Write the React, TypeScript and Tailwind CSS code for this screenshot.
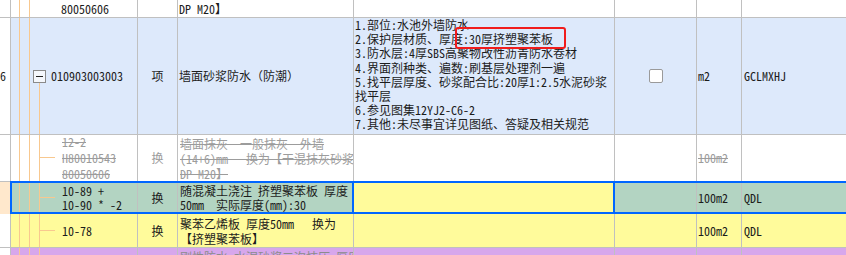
import React from 'react';

const font = "font-['Noto_Sans_Mono_CJK_SC','Noto_Sans_CJK_SC',monospace]";

const Line = ({ className }: { className: string }) => (
  <span className={`absolute w-px bg-[#f8c88f] ${className}`} />
);

const Branch = ({ className }: { className: string }) => (
  <span className={`absolute h-px w-[15px] bg-[#f8c88f] ${className}`} />
);

const desc = [
  '1.部位:水池外墙防水',
  '2.保护层材质、厚度:30厚挤塑聚苯板',
  '3.防水层:4厚SBS高聚物改性沥青防水卷材',
  '4.界面剂种类、遍数:刷基层处理剂一遍',
  '5.找平层厚度、砂浆配合比:20厚1:2.5水泥砂浆',
  '找平层',
  '6.参见图集12YJ2-C6-2',
  '7.其他:未尽事宜详见图纸、答疑及相关规范',
];

export default function App() {
  return (
    <div className={`relative w-[846px] h-[255px] overflow-hidden bg-white text-[12px] text-[#1c1c1c] ${font}`}>
      {/* row: tail of previous item */}
      <div className="flex h-[18px] border-b border-[#c0c0c0] leading-[14px]">
        <div className="w-[11px] border-r border-[#c0c0c0]" />
        <div className="relative flex w-[127px] items-center border-r border-[#c0c0c0] pl-[50px]">
          <Line className="left-[8px] top-0 bottom-0" />
          <Line className="left-[18px] top-0 bottom-0" />
          80050606
        </div>
        <div className="w-[40px] border-r border-[#c0c0c0]" />
        <div className="flex w-[176px] items-center border-r border-[#c0c0c0] pl-[1px] whitespace-pre">DP M20】</div>
        <div className="w-[261px] border-r border-[#c0c0c0]" />
        <div className="w-[82px] border-r border-[#c0c0c0]" />
        <div className="w-[45px] border-r border-[#c0c0c0]" />
        <div className="flex-1" />
      </div>

      {/* row 6: bill item */}
      <div className="flex h-[117px] border-b border-[#c0c0c0]">
        <div className="flex w-[11px] items-center overflow-hidden border-r border-[#c0c0c0] bg-white">6</div>
        <div className="relative flex w-[127px] items-center border-r border-[#c0c0c0] bg-[#dde9fb] pl-[40px]">
          <Line className="left-[8px] top-0 bottom-0" />
          <Line className="left-[18px] top-0 bottom-0" />
          <Line className="left-[28px] top-[65px] bottom-0" />
          <span className="absolute left-[22px] top-[52px] flex h-[13px] w-[13px] items-center justify-center border border-[#8a8a8a] bg-[#f4f7fc]">
            <span className="h-px w-[7px] bg-[#222]" />
          </span>
          010903003003
        </div>
        <div className="flex w-[40px] items-center justify-center border-r border-[#c0c0c0] bg-[#dde9fb]">项</div>
        <div className="flex w-[176px] items-center border-r border-[#c0c0c0] bg-[#dde9fb] pl-[1px]">墙面砂浆防水（防潮）</div>
        <div className="w-[261px] overflow-hidden border-r border-[#c0c0c0] bg-[#dde9fb] pl-[1px] leading-[14.2px]">
          {desc.map((l) => (
            <div key={l} className="whitespace-nowrap">{l}</div>
          ))}
        </div>
        <div className="flex w-[82px] items-center justify-center border-r border-[#c0c0c0] bg-[#dde9fb]">
          <span className="h-[14px] w-[14px] rounded-[2px] border border-[#9a9a9a] bg-white" />
        </div>
        <div className="flex w-[45px] items-center border-r border-[#c0c0c0] bg-[#dde9fb] pl-[1px]">m2</div>
        <div className="flex flex-1 items-center bg-[#dde9fb] pl-[2px]">GCLMXHJ</div>
      </div>

      {/* replaced quota (struck out) */}
      <div className="flex h-[46px] leading-[16px] text-[#9c9c9c]">
        <div className="w-[11px] border-r border-[#c0c0c0]" />
        <div className="relative flex w-[127px] flex-col justify-center border-r border-[#c0c0c0] pl-[51px] line-through">
          <Line className="left-[8px] top-0 bottom-0" />
          <Line className="left-[18px] top-0 bottom-0" />
          <Line className="left-[28px] top-0 bottom-0" />
          <Branch className="left-[29px] top-[22px]" />
          <div>12-2</div>
          <div>H80010543</div>
          <div>80050606</div>
        </div>
        <div className="flex w-[40px] items-center justify-center border-r border-[#c0c0c0]">换</div>
        <div className="flex w-[176px] flex-col justify-center overflow-hidden border-r border-[#c0c0c0] pl-[2px] leading-[15px] whitespace-pre line-through">
          <div>墙面抹灰  一般抹灰  外墙</div>
          <div>(14+6)mm   换为【干混抹灰砂浆</div>
          <div>DP M20】</div>
        </div>
        <div className="w-[261px] border-r border-[#c0c0c0]" />
        <div className="w-[82px] border-r border-[#c0c0c0]" />
        <div className="flex w-[45px] items-center border-r border-[#c0c0c0] pl-[1px] line-through">100m2</div>
        <div className="flex-1" />
      </div>

      {/* selected row */}
      <div className="flex h-[33px] leading-[14px]">
        <div className="w-[10px] border-t border-[#c0c0c0] bg-[#ffe8cc]" />
        <div className="flex flex-1 border-y-2 border-l-2 border-[#0066ff] bg-[#b3d4c2]">
          <div className="relative flex w-[126px] flex-col justify-center border-r border-[#c0c0c0] pl-[50px] whitespace-pre">
            <Line className="left-[7px] top-0 bottom-0" />
            <Line className="left-[17px] top-0 bottom-0" />
            <Line className="left-[27px] top-0 bottom-0" />
            <Branch className="left-[28px] top-[14px]" />
            <div>10-89 +</div>
            <div>10-90 * -2</div>
          </div>
          <div className="flex w-[40px] items-center justify-center border-r border-[#c0c0c0]">换</div>
          <div className="flex w-[174px] flex-col justify-center overflow-hidden pl-[2px] whitespace-pre">
            <div>随混凝土浇注 挤塑聚苯板 厚度</div>
            <div>50mm  实际厚度(mm):30</div>
          </div>
          <div className="w-[263px] border-x-2 border-[#0066ff] bg-[#fffb9b]" />
          <div className="w-[82px] border-r border-[#c0c0c0]" />
          <div className="flex w-[45px] items-center border-r border-[#c0c0c0] pl-[1px]">100m2</div>
          <div className="flex flex-1 items-center pl-[2px]">QDL</div>
        </div>
      </div>

      {/* 10-78 */}
      <div className="flex h-[34px] border-b border-[#c0c0c0] leading-[15px]">
        <div className="w-[11px] border-r border-[#c0c0c0] bg-white" />
        <div className="relative flex w-[127px] items-center border-r border-[#c0c0c0] bg-[#fffb9b] pl-[51px]">
          <Line className="left-[8px] top-0 bottom-0" />
          <Line className="left-[18px] top-0 bottom-0" />
          <Line className="left-[28px] top-0 bottom-0" />
          <Branch className="left-[29px] top-[16px]" />
          10-78
        </div>
        <div className="flex w-[40px] items-center justify-center border-r border-[#c0c0c0] bg-[#fffb9b]">换</div>
        <div className="flex w-[176px] flex-col justify-center overflow-hidden border-r border-[#c0c0c0] bg-[#fffb9b] pl-[2px] whitespace-pre">
          <div>聚苯乙烯板 厚度50mm   换为</div>
          <div>【挤塑聚苯板】</div>
        </div>
        <div className="w-[261px] border-r border-[#c0c0c0] bg-[#fffb9b]" />
        <div className="w-[82px] border-r border-[#c0c0c0] bg-[#fffb9b]" />
        <div className="flex w-[45px] items-center border-r border-[#c0c0c0] bg-[#fffb9b] pl-[1px]">100m2</div>
        <div className="flex flex-1 items-center bg-[#fffb9b] pl-[2px]">QDL</div>
      </div>

      {/* next item, cut off */}
      <div className="flex h-[40px] leading-[15px] text-[#8c8c8c]">
        <div className="w-[11px] border-r border-[#c0c0c0] bg-white" />
        <div className="relative w-[127px] border-r border-[#c0c0c0] bg-[#d7a7ec]">
          <Line className="left-[8px] top-0 bottom-0" />
          <Line className="left-[18px] top-0 bottom-0" />
          <Line className="left-[28px] top-0 bottom-0" />
        </div>
        <div className="w-[40px] border-r border-[#c0c0c0] bg-[#d7a7ec]" />
        <div className="w-[176px] overflow-hidden border-r border-[#c0c0c0] bg-[#d7a7ec] pl-[2px] pt-[1px] whitespace-pre">刚性防水 水泥砂浆二次抹压 厚度</div>
        <div className="w-[261px] border-r border-[#c0c0c0] bg-[#d7a7ec]" />
        <div className="w-[82px] border-r border-[#c0c0c0] bg-[#d7a7ec]" />
        <div className="w-[45px] border-r border-[#c0c0c0] bg-[#d7a7ec]" />
        <div className="flex-1 bg-[#d7a7ec]" />
      </div>

      {/* red annotation box */}
      <div className="absolute left-[455px] top-[27px] h-[22px] w-[111px] rounded-[3px] border-2 border-[#f01c1c]" />
    </div>
  );
}
